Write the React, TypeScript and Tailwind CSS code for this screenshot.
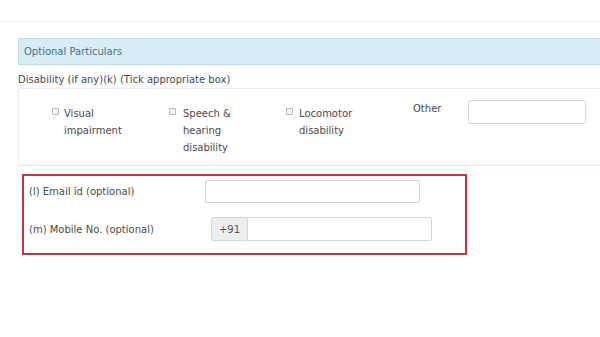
export default function App() {
  return (
    <div
      className="w-[600px] h-[337px] bg-white overflow-hidden text-[#4a4a4a]"
      style={{ fontFamily: '"DejaVu Sans", Verdana, sans-serif' }}
    >
      <div className="h-[22px] border-b border-[#f3f3f3]" />
      <div className="pt-[16px] pl-[18px]">
        {/* Section header */}
        <div className="h-[27px] flex items-center pl-[5px] bg-[#d8ecf5] border border-r-0 border-[#bcdce9] rounded-l-[2px] text-[10px] text-[#4a6f86]">
          Optional Particulars
        </div>

        <div className="mt-[9px] text-[10px] leading-[12px]">Disability (if any)(k) (Tick appropriate box)</div>

        {/* Disability box */}
        <div className="mt-[2px] h-[78px] border-t border-l border-b border-[#ebebeb] border-b-[#f3dede] flex items-start pt-[16px] text-[10px] leading-[17px]">
          <div className="w-[150px] pl-[33px] flex items-start gap-[5px]">
            <span className="mt-[3px] w-[7px] h-[7px] border border-[#b8b8b8] bg-[#f4f4f4] rounded-[1px]" />
            <span>Visual<br />impairment</span>
          </div>
          <div className="w-[117px] flex items-start gap-[7px]">
            <span className="mt-[3px] w-[7px] h-[7px] border border-[#b8b8b8] bg-[#f4f4f4] rounded-[1px]" />
            <span>Speech &amp;<br />hearing<br />disability</span>
          </div>
          <div className="w-[127px] flex items-start gap-[6px]">
            <span className="mt-[3px] w-[7px] h-[7px] border border-[#b8b8b8] bg-[#f4f4f4] rounded-[1px]" />
            <span>Locomotor<br />disability</span>
          </div>
          <div className="w-[55px] -mt-[5px]">Other</div>
          <div className="-mt-[5px] w-[118px] h-[24px] border border-[#d6d6d6] rounded-[2px] bg-white" />
        </div>

        {/* Highlighted contact fields */}
        <div className="mt-[8px] ml-[4px] w-[445px] h-[81px] border-2 border-[#c8343c] pl-[5px] pt-[4px] text-[10px]">
          <div className="flex items-center h-[23px]">
            <div className="w-[176px]">(l) Email id (optional)</div>
            <div className="w-[215px] h-[23px] border border-[#d6d6d6] rounded-[2px]" />
          </div>
          <div className="flex items-center h-[24px] mt-[14px]">
            <div className="w-[182px]">(m) Mobile No. (optional)</div>
            <div className="flex h-[24px]">
              <div className="w-[37px] flex items-center justify-center bg-[#eeeeee] border border-[#d6d6d6] rounded-l-[2px] text-[#555]">+91</div>
              <div className="w-[184px] border border-l-0 border-[#d6d6d6] rounded-r-[2px]" />
            </div>
          </div>
        </div>
      </div>
    </div>
  );
}
